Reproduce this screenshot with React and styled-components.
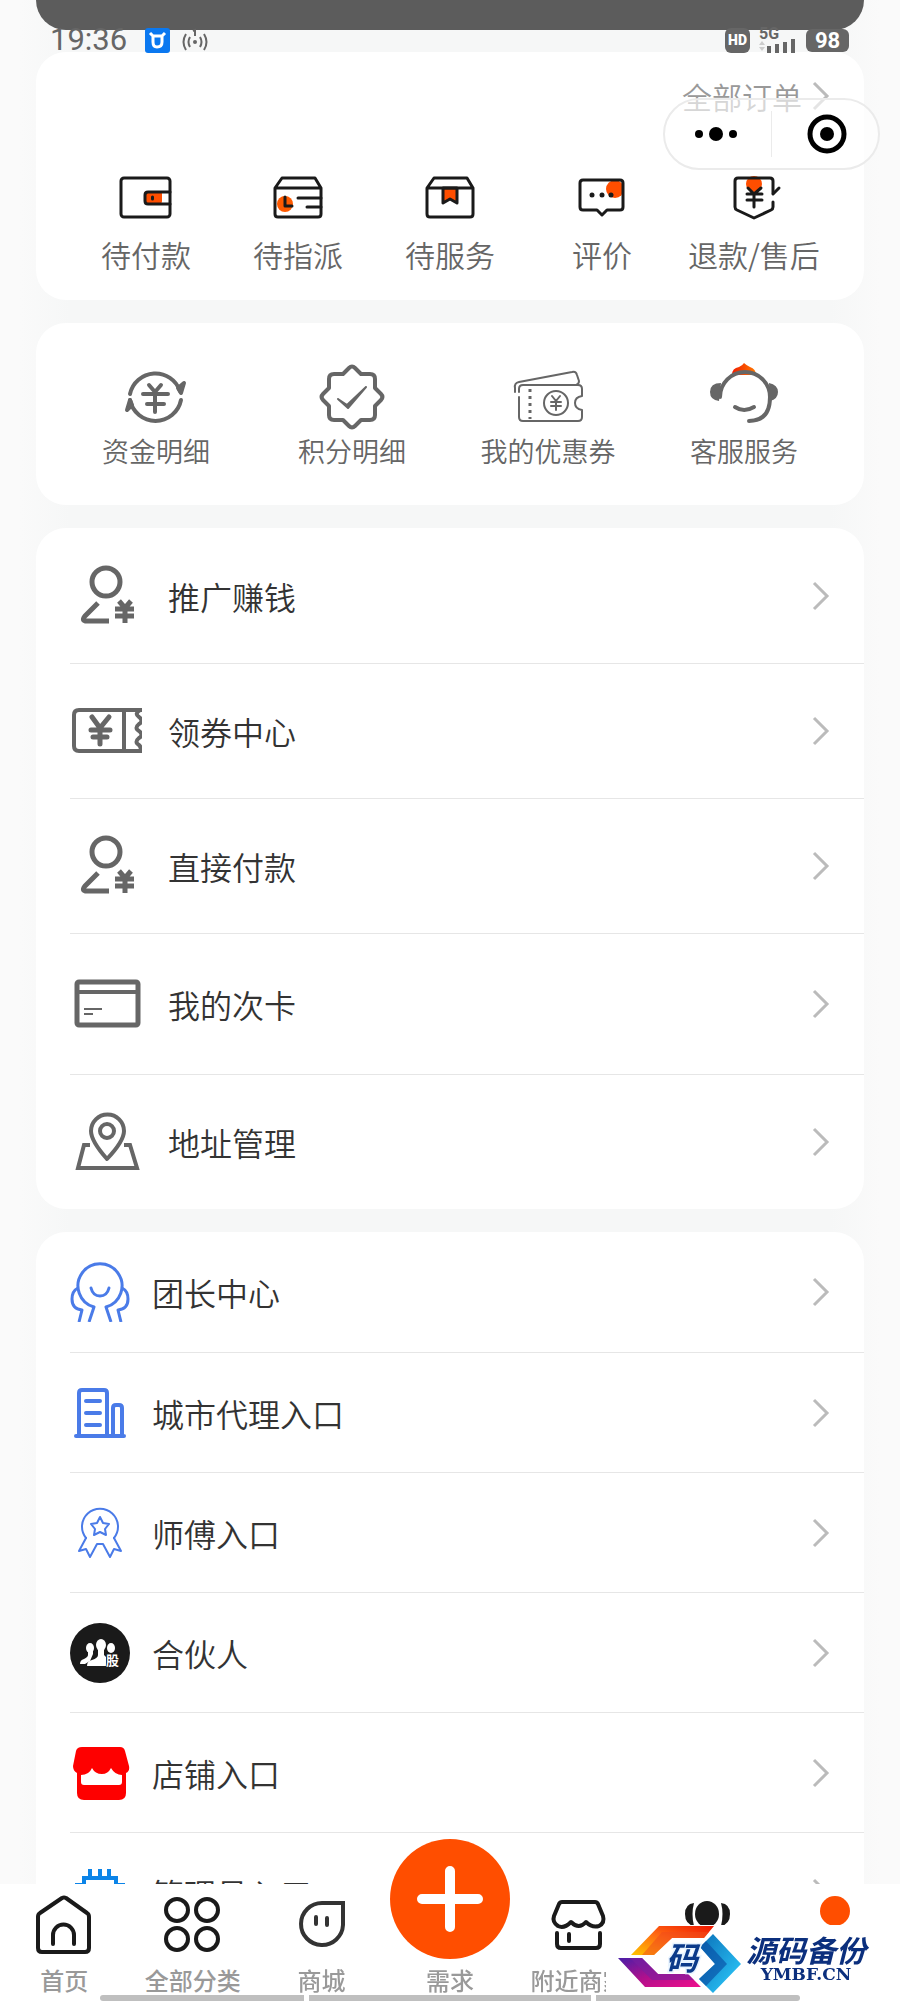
import React from 'react';
import styled, { createGlobalStyle } from 'styled-components';

const GlobalStyle = createGlobalStyle`
  * {
    box-sizing: border-box;
  }

  body {
    margin: 0;
    background-color: #f8f8f8;
    font-family: 'Noto Sans CJK SC', sans-serif;
    font-weight: 350;
  }

  button {
    font: inherit;
    color: inherit;
    background: none;
    border: none;
    padding: 0;
    cursor: pointer;
  }

  svg {
    display: block;
    flex-shrink: 0;
  }
`;

const Page = styled.div`
  position: relative;
  min-height: 100vh;
  padding: 0 36px;
  overflow: hidden;
  background: linear-gradient(
    to right,
    #fafafa 20px,
    #f6f7f7 70px,
    #f6f7f7 calc(100% - 70px),
    #fafafa calc(100% - 20px)
  );
`;

const Banner = styled.div`
  height: 30px;
  margin-bottom: 22px;
  background-color: #5c5c5c;
  border-radius: 0 0 30px 30px;
`;

const StatusBar = styled.div`
  position: absolute;
  top: 24px;
  left: 50px;
  right: 51px;
  height: 32px;
  display: flex;
  align-items: center;
  justify-content: space-between;
  color: #666;
`;

const StatusGroup = styled.div`
  display: flex;
  align-items: center;
  gap: ${({ $gap }) => $gap}px;
`;

const Clock = styled.span`
  font-family: Roboto, sans-serif;
  font-weight: 400;
  font-size: 31px;
  line-height: 32px;
  margin-right: 6px;
`;

const HdTag = styled.span`
  width: 25px;
  height: 25px;
  border-radius: 6px;
  background-color: #666;
  color: #fff;
  font-family: Roboto, sans-serif;
  font-weight: 900;
  font-size: 14px;
  line-height: 25px;
  text-align: center;
`;

const Signal = styled.div`
  display: flex;
  flex-direction: column;
  height: 26px;
  font-family: Roboto, sans-serif;
  font-weight: 700;
  font-size: 16px;
  line-height: 14px;
`;

const SignalBars = styled.svg`
  margin-top: -3px;
`;

const Battery = styled.span`
  width: 43px;
  height: 23px;
  border-radius: 6px;
  background-color: #666;
  color: #fff;
  font-family: Roboto, sans-serif;
  font-weight: 700;
  font-size: 22px;
  line-height: 24px;
  text-align: center;
`;

const Cards = styled.main`
  display: flex;
  flex-direction: column;
  gap: 23px;
`;

const Card = styled.section`
  background-color: #fff;
  border-radius: 30px;
`;

const OrderCard = styled(Card)`
  padding: 22px 34px 28px;
`;

const AllOrders = styled.button`
  display: flex;
  align-items: center;
  gap: 10px;
  margin: 0 0 50px auto;
  color: #999;
  font-size: 30px;
  line-height: 44px;
`;

const OrderGrid = styled.div`
  display: grid;
  grid-template-columns: repeat(5, 1fr);
`;

const OrderItem = styled.button`
  display: flex;
  flex-direction: column;
  align-items: center;
  gap: 8px;
  color: #666;
  font-size: 30px;
  line-height: 36px;
  white-space: nowrap;
`;

const AssetCard = styled(Card)`
  display: grid;
  grid-template-columns: repeat(4, 1fr);
  padding: 38px 22px 36px;
`;

const AssetItem = styled.button`
  display: flex;
  flex-direction: column;
  align-items: center;
  color: #666;
  font-size: 27px;
  line-height: 36px;
  white-space: nowrap;
`;

const MenuCard = styled(Card)`
  padding-left: 34px;
`;

const MenuRow = styled.button`
  display: flex;
  align-items: center;
  width: 100%;
  height: ${({ $height }) => $height}px;
  padding-right: 34px;
  gap: ${({ $gap }) => $gap}px;
  color: #333;
  font-size: 32px;
  line-height: 44px;
  text-align: left;

  & + & {
    border-top: 1px solid #e6e6e6;
  }
`;

const MenuLabel = styled.span`
  flex: 1;
`;

const Capsule = styled.div`
  position: absolute;
  top: 98px;
  right: 20px;
  width: 217px;
  height: 72px;
  display: flex;
  align-items: center;
  border: 2px solid #ebebeb;
  border-radius: 36px;
  background-color: rgba(255, 255, 255, 0.6);
`;

const CapsuleButton = styled.button`
  flex: 1;
  height: 46px;
  padding-right: 4px;
  display: flex;
  align-items: center;
  justify-content: center;

  & + & {
    padding: 0 0 0 4px;
    border-left: 1px solid #ebebeb;
  }
`;

const TabBar = styled.nav`
  position: fixed;
  left: 0;
  right: 0;
  bottom: 0;
  height: 119px;
  padding-bottom: 6px;
  display: flex;
  align-items: flex-end;
  background-color: #fff;
`;

const Tab = styled.button`
  flex: 1 1 0;
  min-width: 0;
  min-height: 102px;
  display: flex;
  flex-direction: column;
  align-items: center;
  justify-content: flex-start;
  gap: ${({ $gap }) => $gap || 8}px;
  color: ${({ $active }) => ($active ? '#ff4e00' : '#999')};
  font-weight: 500;
  font-size: 24px;
  line-height: 34px;
  white-space: nowrap;
`;

const Plus = styled.span`
  width: 120px;
  height: 120px;
  display: flex;
  align-items: center;
  justify-content: center;
  border-radius: 50%;
  background-color: #ff4e00;
`;

const HomeIndicator = styled.div`
  position: absolute;
  left: 100px;
  right: 100px;
  bottom: 2px;
  height: 6px;
  display: grid;
  grid-template-columns: 204fr 282fr 204fr;
  gap: 5px;
  border-radius: 3px;
  overflow: hidden;
`;

const IndicatorPart = styled.span`
  background-color: #bfbfbf;
`;

const Watermark = styled.div`
  position: absolute;
  right: 24px;
  bottom: 10px;
  height: 68px;
  padding-right: 6px;
  display: flex;
  align-items: center;
  background-color: #fff;
`;

const WatermarkText = styled.div`
  display: flex;
  flex-direction: column;
  align-items: center;
  width: 128px;
  color: #0b2f7d;
`;

const WatermarkName = styled.span`
  font-weight: 700;
  font-style: italic;
  font-size: 30px;
  line-height: 30px;
`;

const WatermarkSite = styled.span`
  font-family: 'DejaVu Serif', serif;
  font-weight: 700;
  font-size: 17px;
  line-height: 20px;
`;

// Shared svg frame, every drawing uses a square view box
function Icon({ size = 60, color = '#1a1a1a', width = 3, children }) {
  return (
    <svg
      width={size}
      height={size}
      viewBox={`0 0 ${size} ${size}`}
      fill="none"
      stroke={color}
      strokeWidth={width}
      strokeLinecap="round"
      strokeLinejoin="round"
      aria-hidden="true"
    >
      {children}
    </svg>
  );
}

function Chevron() {
  return (
    <svg width="18" height="30" viewBox="0 0 18 30" fill="none" aria-hidden="true">
      <path d="M2 2L15 15L2 28" stroke="#bbb" strokeWidth="3" />
    </svg>
  );
}

const WalletIcon = () => (
  <Icon>
    <rect x="28" y="23" width="18" height="13" rx="3" fill="#ff4e00" stroke="none" />
    <rect x="5" y="10" width="49" height="39" rx="3" />
    <path d="M54 24H32q-3 0-3 3v6q0 3 3 3h22M36.500 29v2" />
  </Icon>
);

const AssignIcon = () => (
  <Icon>
    <circle cx="17" cy="36" r="8" fill="#ff5a00" stroke="none" />
    <path d="M7 20L14 10H47L53 20V46q0 3-3 3H10q-3 0-3-3ZM7 20H53" />
    <path d="M17 29V38H24M30 30H53M39 39H53" />
  </Icon>
);

const PackageIcon = () => (
  <Icon>
    <path d="M23 20H37V35L30 31L23 35Z" fill="#ff4e00" />
    <path d="M7 20L14 10H47L53 20V46q0 3-3 3H10q-3 0-3-3ZM7 20H53" />
  </Icon>
);

const CommentIcon = () => (
  <Icon>
    <circle cx="43" cy="21" r="9" fill="#ff4e00" stroke="none" />
    <path d="M11 12H48q3 0 3 3V39q0 3-3 3H35L30 47L25 42H11q-3 0-3-3V15q0-3 3-3Z" />
    <g fill="#1a1a1a" stroke="none">
      <circle cx="20" cy="27" r="2.500" />
      <circle cx="30" cy="27" r="2.500" />
      <circle cx="39" cy="27" r="2.500" />
    </g>
  </Icon>
);

const RefundIcon = () => (
  <Icon>
    <circle cx="30" cy="16" r="8" fill="#ff4e00" stroke="none" />
    <path d="M49 25V13q0-3-3-3H14q-3 0-3 3V39q0 2 2 3L30 50L47 42q2-1 2-3V34" />
    <path d="M49 26L55 20" />
    <path d="M24 20L30 26L37 20M23 26H38M23 32H38M30 26V39" />
  </Icon>
);

const FundsIcon = () => (
  <Icon size={72} color="#666" width={4}>
    <path d="M10 33A26 26 0 0 1 60 30M61 39A26 26 0 0 1 10 39" />
    <path d="M58 27L61 32L64 22ZM12 44L10 39L7 49Z" fill="#666" />
    <path d="M29 24L35 31L41 24M23 33H48M27 43H44M35 31V51" />
  </Icon>
);

const PointsIcon = () => (
  <Icon size={72} color="#666" width={4}>
    <path d="M33 7Q36 4 39 7L45 13H54Q59 13 59 18V27L65 33Q68 36 65 39L59 45V54Q59 59 54 59H45L39 65Q36 68 33 65L27 59H18Q13 59 13 54V45L7 39Q4 36 7 33L13 27V18Q13 13 18 13H27Z" />
    <path d="M22 38L31 44L50 26L32 47Z" fill="#666" strokeWidth="2" />
  </Icon>
);

const CouponIcon = () => (
  <Icon size={72} color="#666" width={2}>
    <path d="M3 31V27Q2 22 7 21L60 11Q64 10 65 14L67 20Q67 23 64 24" />
    <path d="M7 36V56Q7 60 11 60H66Q70 60 70 56V49Q63 48 63 42Q63 36 70 35V28Q70 24 66 24H11Q7 24 7 28V31" />
    <path d="M18 28V58" strokeDasharray="3 4" strokeWidth="3" strokeLinecap="butt" />
    <circle cx="44" cy="42" r="12" />
    <path d="M40 35L44 40L48 35M39 41H49M39 45H49M44 40V49" />
  </Icon>
);

const ServiceIcon = () => (
  <Icon size={72} color="#666" width={4}>
    <defs>
      <linearGradient id="hat" x1="0" y1="0" x2="1" y2="0">
        <stop offset="0" stopColor="#f01c00" />
        <stop offset="1" stopColor="#ff7a00" />
      </linearGradient>
    </defs>
    <path d="M24 14Q24 7 31 6Q35 4 36 2Q38 4 42 6Q48 8 48 14Z" fill="url(#hat)" stroke="none" />
    <path d="M12 36A25 25 0 0 1 62 36Q62 60 41 60" />
    <path d="M13 22Q2 22 2 31Q2 39 11 40ZM61 22Q70 24 70 31Q70 38 62 40Z" fill="#666" stroke="none" />
    <path d="M27 46Q36 52 46 46" />
  </Icon>
);

const PersonYenIcon = () => (
  <Icon size={72} color="#666" width={5}>
    <circle cx="36" cy="22" r="14" />
    <g strokeLinecap="butt">
      <path d="M28 43L15 56Q11 61 17 61H39" />
      <path d="M49 41L55 48L61 41M45 49H64M45 56H64M55 48V63" />
    </g>
  </Icon>
);

const TicketIcon = () => (
  <Icon size={72} color="#666" width={4}>
    <path
      d="M72 15H9Q4 15 4 20V51Q4 56 9 56H72M70 15Q64 19 69 22Q74 26 69 29Q64 33 69 36Q74 40 69 43Q64 47 69 50Q72 53 70 56M54 15V56"
      strokeLinecap="butt"
    />
    <path d="M22 22L30 33L39 22M21 35H40M23 42H37M30 33V49" strokeWidth="5" />
  </Icon>
);

const CardIcon = () => (
  <Icon size={72} color="#666" width={5}>
    <rect x="7" y="14" width="61" height="43" rx="2" />
    <path d="M7 24H68" strokeWidth="4" />
    <path d="M14 41H32M14 46H23" strokeWidth="2" strokeLinecap="butt" />
  </Icon>
);

const AddressIcon = () => (
  <Icon size={72} color="#666" width={4}>
    <path d="M37 53Q21 35 21 25A16 16 0 0 1 54 25Q54 35 37 53Z" />
    <circle cx="37" cy="25" r="7" />
    <path d="M20 39H14L8 62H67L60 39H54" strokeLinecap="butt" strokeLinejoin="miter" />
  </Icon>
);

const LeaderIcon = () => (
  <Icon color="#4a7be8" width={3}>
    <path d="M19 60L24 45A22 22 0 1 1 36 45L41 60" strokeLinecap="butt" />
    <path d="M8 26Q2 29 2 37Q2 47 12 48L9 60M52 26Q58 29 58 37Q58 47 48 48L51 60" strokeLinecap="butt" />
    <path d="M21 26Q23 34 30 34Q37 34 39 26" />
  </Icon>
);

const CityIcon = () => (
  <Icon color="#4a7be8" width={4}>
    <path d="M9 53V10Q9 7 12 7H34Q37 7 37 10V53M43 53V25Q43 22 46 22H49Q52 22 52 25V53M6 53H54" />
    <path d="M16 18H30M16 30H30M16 42H30" />
  </Icon>
);

const MasterIcon = () => (
  <Icon color="#4a7be8" width={2}>
    <path d="M16 35A18 18 0 1 1 44 35" />
    <path d="M16 35L9 48L16 46L20 54L27 41H33L40 54L44 46L51 48L44 35" />
    <path d="M30 14L33 20L39 21L35 26L36 32L30 29L24 32L25 26L21 21L27 20Z" />
  </Icon>
);

const PartnerIcon = () => (
  <Icon>
    <circle cx="30" cy="30" r="30" fill="#1a1a1a" stroke="none" />
    <g fill="#fff" stroke="none">
      <ellipse cx="20" cy="25" rx="4" ry="5" />
      <path d="M18 28H23V31L20 38L15 41H10Q10 37 14 36Q18 34 18 32Z" />
      <ellipse cx="41" cy="25" rx="4" ry="5" />
      <ellipse cx="31" cy="22" rx="5" ry="6" />
      <path d="M28 26H34V32L36 34V43H17Q17 38 22 37Q28 35 28 32Z" />
      <text x="36" y="42" fontSize="13" fontWeight="700" stroke="#1a1a1a" strokeWidth="1" paintOrder="stroke">
        股
      </text>
    </g>
  </Icon>
);

const StoreIcon = () => (
  <Icon>
    <path
      d="M12 4H50Q54 4 55 8L59 23Q60 28 56 30V50Q56 57 49 57H14Q7 57 7 50V30Q3 28 3 23L6 8Q7 4 12 4Z"
      fill="#fe0000"
      stroke="none"
    />
    <path
      d="M11 32Q19 32 22 25Q25 31 32 31Q38 31 41 25Q45 32 52 32V39Q52 42 49 42H14Q11 42 11 39Z"
      fill="#fff"
      stroke="none"
    />
  </Icon>
);

const AdminIcon = () => (
  <Icon color="#0b84e8" width={4}>
    <g strokeLinecap="butt" strokeLinejoin="miter">
      <rect x="14" y="15" width="32" height="32" />
      <path d="M20 6V15M30 6V15M39 6V15M5 22H14M46 22H55" />
      <path d="M22 24H38V38H22Z" />
    </g>
  </Icon>
);

const HomeIcon = () => (
  <Icon width={4}>
    <path d="M28 3Q30 2 32 3L53 18Q55 19 55 22V53Q55 57 51 57H8Q4 57 4 53V22Q4 19 6 18Z" />
    <path d="M19 49V40A10 10 0 0 1 40 40V49" />
  </Icon>
);

const GridIcon = () => (
  <Icon width={4}>
    <circle cx="14" cy="15" r="11" />
    <circle cx="44" cy="15" r="11" />
    <circle cx="14" cy="44" r="11" />
    <circle cx="44" cy="44" r="11" />
  </Icon>
);

const MallIcon = () => (
  <Icon color="#333" width={4}>
    <path d="M52 8V30A21 21 0 1 1 31 8Z" strokeLinejoin="miter" />
    <path d="M25 22V29M36 23V30" />
  </Icon>
);

const NearbyIcon = () => (
  <Icon width={4}>
    <path d="M13 7H46Q48 7 49 9L54 21Q56 28 50 31Q43 33 37 27Q30 35 22 27Q15 34 9 31Q3 27 5 21L10 9Q11 7 13 7Z" />
    <path d="M8 38V49Q8 53 12 53H47Q51 53 51 49V38M20 39V46" />
  </Icon>
);

const PeopleIcon = () => (
  <Icon>
    <g fill="#1a1a1a" stroke="none">
      <ellipse cx="30" cy="19" rx="12" ry="13" />
      <path d="M17 8Q8 9 8 19Q8 29 17 31Q14 19 17 8ZM44 8Q53 9 53 19Q53 29 44 31Q47 19 44 8Z" />
    </g>
  </Icon>
);

const MineIcon = () => (
  <Icon color="#ff4e00">
    <circle cx="29" cy="16" r="15" fill="#ff4e00" stroke="none" />
  </Icon>
);

const PlusIcon = () => (
  <Icon size={72} color="#fff" width={10}>
    <path d="M36 8V64M8 36H64" />
  </Icon>
);

const WatermarkLogo = () => (
  <svg width="136" height="67" viewBox="0 0 136 67" aria-hidden="true">
    <defs>
      <linearGradient id="warm" x1="0" y1="1" x2="1" y2="0">
        <stop offset="0" stopColor="#ffc400" />
        <stop offset="0.500" stopColor="#ff6a13" />
        <stop offset="1" stopColor="#ee1500" />
      </linearGradient>
      <linearGradient id="violet" x1="0" y1="0" x2="1" y2="1">
        <stop offset="0" stopColor="#4a1fa8" />
        <stop offset="0.500" stopColor="#b0108c" />
        <stop offset="1" stopColor="#f0108c" />
      </linearGradient>
      <linearGradient id="cool" x1="0" y1="0" x2="1" y2="1">
        <stop offset="0" stopColor="#0a6fb8" />
        <stop offset="1" stopColor="#2fd0ff" />
      </linearGradient>
    </defs>
    <path d="M53 0H108L98 12H66L48 29H25Z" fill="url(#warm)" />
    <path d="M56 6H103L98 12H66L48 29H36Z" fill="#f04a1c" opacity="0.500" />
    <path d="M12 32H36L52 48H82L95 61H39Z" fill="url(#violet)" />
    <path d="M24 32H36L52 48H82L88 54H46Z" fill="#7a1fa0" opacity="0.600" />
    <path d="M107 8L135 38L107 67L93 53L109 38L94 21Z" fill="url(#cool)" />
    <path d="M94 21L100 15L121 38L100 60L93 53L109 38Z" fill="#0648a0" opacity="0.600" />
    <text
      x="76"
      y="44"
      textAnchor="middle"
      fontSize="32"
      fontWeight="700"
      fontStyle="italic"
      fill="#0b3a8a"
      stroke="#e8f4ff"
      strokeWidth="3"
      paintOrder="stroke"
    >
      码
    </text>
  </svg>
);

const orders = [
  { label: '待付款', icon: <WalletIcon /> },
  { label: '待指派', icon: <AssignIcon /> },
  { label: '待服务', icon: <PackageIcon /> },
  { label: '评价', icon: <CommentIcon /> },
  { label: '退款/售后', icon: <RefundIcon /> },
];

const assets = [
  { label: '资金明细', icon: <FundsIcon /> },
  { label: '积分明细', icon: <PointsIcon /> },
  { label: '我的优惠券', icon: <CouponIcon /> },
  { label: '客服服务', icon: <ServiceIcon /> },
];

const services = [
  { label: '推广赚钱', icon: <PersonYenIcon />, height: 135 },
  { label: '领券中心', icon: <TicketIcon />, height: 135 },
  { label: '直接付款', icon: <PersonYenIcon />, height: 135 },
  { label: '我的次卡', icon: <CardIcon />, height: 141 },
  { label: '地址管理', icon: <AddressIcon />, height: 135 },
];

const entries = [
  { label: '团长中心', icon: <LeaderIcon /> },
  { label: '城市代理入口', icon: <CityIcon /> },
  { label: '师傅入口', icon: <MasterIcon /> },
  { label: '合伙人', icon: <PartnerIcon /> },
  { label: '店铺入口', icon: <StoreIcon /> },
  { label: '管理员入口', icon: <AdminIcon /> },
];

function MenuItem({ label, icon, height = 120, gap = 22 }) {
  return (
    <MenuRow type="button" $height={height} $gap={gap}>
      {icon}
      <MenuLabel>{label}</MenuLabel>
      <Chevron />
    </MenuRow>
  );
}

function Status() {
  return (
    <StatusBar>
      <StatusGroup $gap={12}>
        <Clock>19:36</Clock>
        <svg width="25" height="25" viewBox="0 0 25 25" fill="none" aria-hidden="true">
          <rect width="25" height="25" rx="3" fill="#0a78f0" />
          <path d="M5 5L8 8H17L20 5M8 8V14Q8 19 12 19Q17 19 17 14V8" stroke="#fff" strokeWidth="3" />
        </svg>
        <svg width="26" height="24" viewBox="0 0 26 24" fill="none" stroke="#666" strokeWidth="2" aria-hidden="true">
          <circle cx="13" cy="14" r="2" fill="#666" stroke="none" />
          <path d="M8 9Q5 14 8 19M4 6Q-1 14 4 22M18 9Q21 14 18 19M22 6Q27 14 22 22M11 3L13 2V8" />
        </svg>
      </StatusGroup>
      <StatusGroup $gap={9}>
        <HdTag>HD</HdTag>
        <Signal>
          5G
          <SignalBars width="38" height="15" viewBox="0 0 38 15" aria-hidden="true">
            <path d="M0 7L3 3L6 7ZM0 9H6L3 13Z" fill="#ccc" />
            <path d="M8 8h4v7h-4zM16 6h4v9h-4zM24 4h4v11h-4zM32 1h4v14h-4z" fill="#666" />
          </SignalBars>
        </Signal>
        <Battery>98</Battery>
      </StatusGroup>
    </StatusBar>
  );
}

function App() {
  return (
    <>
      <GlobalStyle />
      <Page>
        <Banner />
        <Status />
        <Cards>
          <OrderCard>
            <AllOrders type="button">
              全部订单
              <Chevron />
            </AllOrders>
            <OrderGrid>
              {orders.map(({ label, icon }) => (
                <OrderItem type="button" key={label}>
                  {icon}
                  {label}
                </OrderItem>
              ))}
            </OrderGrid>
          </OrderCard>
          <AssetCard>
            {assets.map(({ label, icon }) => (
              <AssetItem type="button" key={label}>
                {icon}
                {label}
              </AssetItem>
            ))}
          </AssetCard>
          <MenuCard>
            {services.map((item) => (
              <MenuItem key={item.label} {...item} gap={26} />
            ))}
          </MenuCard>
          <MenuCard>
            {entries.map((item) => (
              <MenuItem key={item.label} {...item} />
            ))}
          </MenuCard>
        </Cards>
        <Capsule>
          <CapsuleButton type="button">
            <svg width="42" height="14" viewBox="0 0 42 14" aria-hidden="true">
              <circle cx="4" cy="7" r="4" />
              <circle cx="21" cy="7" r="7" />
              <circle cx="38" cy="7" r="4" />
            </svg>
          </CapsuleButton>
          <CapsuleButton type="button">
            <svg width="40" height="40" viewBox="0 0 40 40" aria-hidden="true">
              <circle cx="20" cy="20" r="17" fill="none" stroke="#000" strokeWidth="5" />
              <circle cx="20" cy="20" r="7" />
            </svg>
          </CapsuleButton>
        </Capsule>
      </Page>
      <TabBar>
        <Tab type="button">
          <HomeIcon />
          首页
        </Tab>
        <Tab type="button">
          <GridIcon />
          全部分类
        </Tab>
        <Tab type="button">
          <MallIcon />
          商城
        </Tab>
        <Tab type="button" $gap={4}>
          <Plus>
            <PlusIcon />
          </Plus>
          需求
        </Tab>
        <Tab type="button">
          <NearbyIcon />
          附近商家
        </Tab>
        <Tab type="button">
          <PeopleIcon />
        </Tab>
        <Tab type="button" $active>
          <MineIcon />
          我的
        </Tab>
        <HomeIndicator>
          <IndicatorPart />
          <IndicatorPart />
          <IndicatorPart />
        </HomeIndicator>
        <Watermark>
          <WatermarkLogo />
          <WatermarkText>
            <WatermarkName>源码备份</WatermarkName>
            <WatermarkSite>YMBF.CN</WatermarkSite>
          </WatermarkText>
        </Watermark>
      </TabBar>
    </>
  );
}

export default App;
